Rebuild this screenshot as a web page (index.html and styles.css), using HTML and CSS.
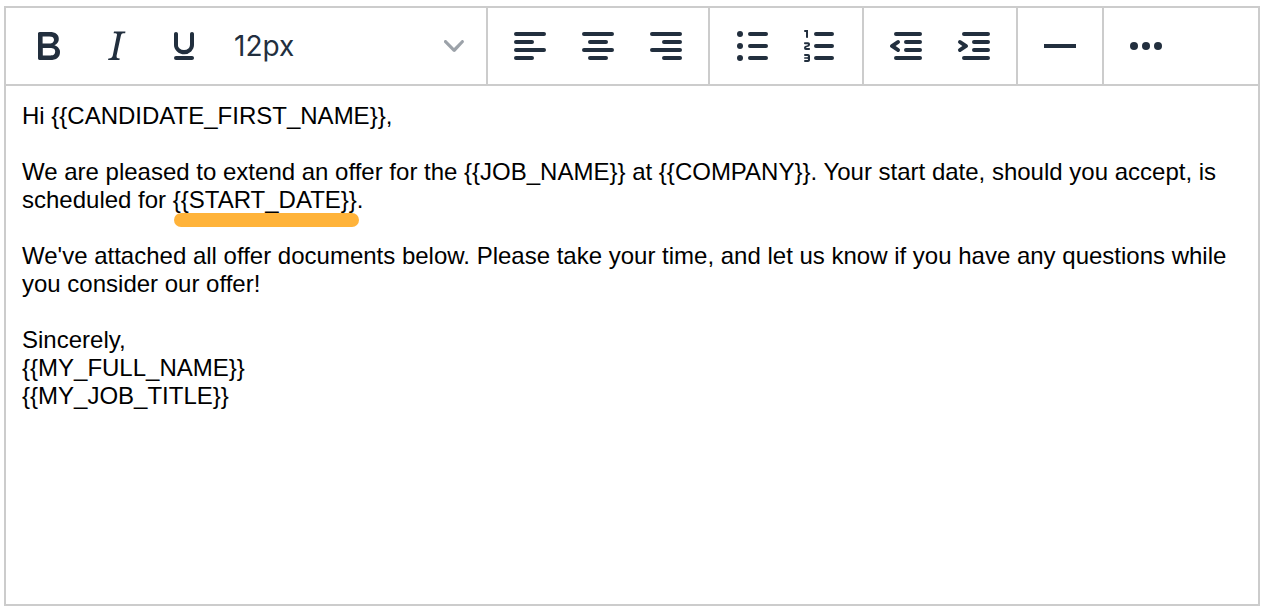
FILE: index.html
```html
<!DOCTYPE html>
<html lang="en">
<head>
  <meta charset="UTF-8" />
  <meta name="viewport" content="width=device-width, initial-scale=1" />
  <title>Offer Email</title>
  <link rel="stylesheet" href="styles.css">
</head>
<body>
  <div class="editor">
    <div class="toolbar" role="toolbar" aria-label="Formatting">

      <!-- Text style -->
      <div class="toolbar-group">
        <button type="button" class="tool" aria-label="Bold">
          <svg viewBox="0 0 24 24"><path fill-rule="evenodd" d="M7.8 19c-.3 0-.5 0-.6-.2l-.2-.5V5.7c0-.2 0-.4.2-.5l.6-.2h5c1.5 0 2.7.3 3.5 1 .7.6 1.1 1.4 1.1 2.5a3 3 0 0 1-.6 1.9c-.4.6-1 1-1.6 1.2.4.1.9.3 1.3.6s.8.7 1 1.2c.4.4.5 1 .5 1.6 0 1.3-.4 2.3-1.3 3-.8.7-2.1 1-3.8 1H7.8zm5-8.3c.6 0 1.2-.1 1.6-.5.4-.3.6-.7.6-1.3 0-1.1-.8-1.7-2.3-1.7H9.3v3.5h3.4zm.5 6c.7 0 1.3-.1 1.7-.4.4-.4.6-.9.6-1.5s-.2-1-.7-1.4c-.4-.3-1-.4-2-.4H9.4v3.8h4z"/></svg>
        </button>
        <button type="button" class="tool" aria-label="Italic">
          <svg viewBox="0 0 24 24"><path d="M16.7 4.7l-.1.9h-.3c-.6 0-1 0-1.4.3-.3.3-.4.6-.5 1.1l-2.1 9.8v.6c0 .5.4.8 1.4.8h.2l-.2.8H8l.2-.8h.2c1.1 0 1.8-.5 2-1.5l2-9.8.1-.5c0-.6-.4-.8-1.4-.8h-.3l.2-.9h5.8z"/></svg>
        </button>
        <button type="button" class="tool" aria-label="Underline">
          <svg viewBox="0 0 24 24"><path d="M16 5c.6 0 1 .4 1 1v5.5a4 4 0 0 1-.4 1.8l-1 1.4a5.3 5.3 0 0 1-5.5 1 5 5 0 0 1-1.6-1c-.5-.4-.8-.9-1.1-1.4a4 4 0 0 1-.4-1.8V6c0-.6.4-1 1-1s1 .4 1 1v5.5c0 .3 0 .6.2 1l.6.7a3.3 3.3 0 0 0 2.2.8 3.4 3.4 0 0 0 2.2-.8c.3-.2.4-.5.6-.8l.2-.9V6c0-.6.4-1 1-1zM8 17h8c.6 0 1 .4 1 1s-.4 1-1 1H8a1 1 0 0 1 0-2z"/></svg>
        </button>
        <div class="size-picker">
          <select class="size-select" aria-label="Font size">
            <option>10px</option>
            <option selected>12px</option>
            <option>14px</option>
            <option>18px</option>
          </select>
          <svg class="chevron" viewBox="0 0 10 10"><path d="M8.7 2.2c.3-.3.8-.3 1 0 .4.4.4.9 0 1.2L5.7 7.8c-.3.3-.9.3-1.2 0L.2 3.4a.8.8 0 0 1 0-1.2c.3-.3.8-.3 1.1 0L5 6l3.7-3.8z"/></svg>
        </div>
      </div>

      <!-- Alignment -->
      <div class="toolbar-group">
        <button type="button" class="tool" aria-label="Align left">
          <svg viewBox="0 0 24 24"><path class="bars" d="M5 6h14M5 10h8M5 14h14M5 18h8"/></svg>
        </button>
        <button type="button" class="tool" aria-label="Align center">
          <svg viewBox="0 0 24 24"><path class="bars" d="M5 6h14M8 10h8M5 14h14M8 18h8"/></svg>
        </button>
        <button type="button" class="tool" aria-label="Align right">
          <svg viewBox="0 0 24 24"><path class="bars" d="M5 6h14M11 10h8M5 14h14M11 18h8"/></svg>
        </button>
      </div>

      <!-- Lists -->
      <div class="toolbar-group">
        <button type="button" class="tool" aria-label="Bullet list">
          <svg viewBox="0 0 24 24">
            <path class="bars" d="M11 6h8M11 12h8M11 18h8"/>
            <circle cx="6" cy="6" r="1.5"/><circle cx="6" cy="12" r="1.5"/><circle cx="6" cy="18" r="1.5"/>
          </svg>
        </button>
        <button type="button" class="tool" aria-label="Numbered list">
          <svg viewBox="0 0 24 24">
            <path class="bars" d="M10 6h8M10 12h8M10 18h8"/>
            <path d="M6 4v3.5c0 .3-.2.5-.5.5a.5.5 0 0 1-.5-.5V5h-.5a.5.5 0 0 1 0-1H6zm-1 8.8l.2.2h1.3c.3 0 .5.2.5.5s-.2.5-.5.5H4.9a1 1 0 0 1-.9-1V13c0-.4.3-.8.6-1l1.2-.4.2-.3a.2.2 0 0 0-.2-.2H4.5a.5.5 0 0 1-.5-.5c0-.3.2-.5.5-.5h1.6c.5 0 .9.4.9 1v.1c0 .4-.3.8-.6 1l-1.2.4-.2.3zM7 17v2c0 .6-.4 1-1 1H4.5a.5.5 0 0 1 0-1h1.2c.2 0 .3-.1.3-.3 0-.2-.1-.3-.3-.3H4.4a.4.4 0 1 1 0-.8h1.3c.2 0 .3-.1.3-.3 0-.2-.1-.3-.3-.3H4.5a.5.5 0 1 1 0-1H6c.6 0 1 .4 1 1z"/>
          </svg>
        </button>
      </div>

      <!-- Indentation -->
      <div class="toolbar-group">
        <button type="button" class="tool" aria-label="Decrease indent">
          <svg viewBox="0 0 24 24">
            <path class="bars" d="M7 6h12M12 10h7M12 14h7M7 18h12"/>
            <path d="M8.6 13.2a1 1 0 0 1-1.2 1.6l-3-2a1 1 0 0 1 0-1.6l3-2a1 1 0 0 1 1.2 1.6L6.8 12l1.8 1.2z"/>
          </svg>
        </button>
        <button type="button" class="tool" aria-label="Increase indent">
          <svg viewBox="0 0 24 24">
            <path class="bars" d="M7 6h12M12 10h7M12 14h7M7 18h12"/>
            <path d="M4.4 13.2L6.2 12l-1.8-1.2a1 1 0 0 1 1.2-1.6l3 2a1 1 0 0 1 0 1.6l-3 2a1 1 0 1 1-1.2-1.6z"/>
          </svg>
        </button>
      </div>

      <div class="toolbar-group">
        <button type="button" class="tool" aria-label="Horizontal line">
          <svg viewBox="0 0 24 24"><path d="M4 11h16v2H4z"/></svg>
        </button>
      </div>

      <div class="toolbar-group">
        <button type="button" class="tool" aria-label="More">
          <svg viewBox="0 0 24 24"><circle cx="6" cy="12" r="2"/><circle cx="12" cy="12" r="2"/><circle cx="18" cy="12" r="2"/></svg>
        </button>
      </div>
    </div>

    <div class="message" role="textbox" aria-multiline="true" aria-label="Message" contenteditable="true" spellcheck="false">
      <p>Hi {{CANDIDATE_FIRST_NAME}},</p>
      <p>We are pleased to extend an offer for the {{JOB_NAME}} at {{COMPANY}}. Your start date, should you accept, is scheduled for <span class="marked">{{START_DATE}}</span>.</p>
      <p>We've attached all offer documents below. Please take your time, and let us know if you have any questions while you consider our offer!</p>
      <p>Sincerely,<br>{{MY_FULL_NAME}}<br>{{MY_JOB_TITLE}}</p>
    </div>
  </div>
</body>
</html>
```

FILE: styles.css
```css
* {
  box-sizing: border-box;
  margin: 0;
  padding: 0;
}

body {
  display: flex;
  min-height: 100vh;
  padding: 6px 6px 6px 4px;
  background: #fff;
  color: #000;
  font-family: "Liberation Sans", Arial, sans-serif;
}

.editor {
  flex: 1;
  display: flex;
  flex-direction: column;
  border: 2px solid #ccc;
}

/* Toolbar */
.toolbar {
  display: flex;
  flex-wrap: wrap;
  border-bottom: 2px solid #ccc;
}

.toolbar-group {
  display: flex;
  align-items: center;
  padding: 4px 8px;
  border-right: 2px solid #ccc;
}

.toolbar-group:last-child {
  border-right: none;
}

.tool {
  display: flex;
  align-items: center;
  justify-content: center;
  width: 68px;
  height: 68px;
  background: none;
  border: none;
  border-radius: 6px;
  cursor: pointer;
}

.tool:hover {
  background: #dee0e2;
}

.tool svg {
  width: 48px;
  height: 48px;
  fill: #222f3e;
}

.tool .bars {
  fill: none;
  stroke: #222f3e;
  stroke-width: 2;
  stroke-linecap: round;
}

/* Font size drop-down, the chevron shares the select's grid cell */
.size-picker {
  display: grid;
  align-items: center;
  width: 260px;
}

.size-select,
.chevron {
  grid-area: 1 / 1;
}

.size-select {
  width: 100%;
  height: 68px;
  padding: 0 48px 0 16px;
  appearance: none;
  background: none;
  border: none;
  color: #222f3e;
  font-family: Inter, Roboto, sans-serif;
  font-size: 28px;
  cursor: pointer;
}

.chevron {
  justify-self: end;
  width: 20px;
  height: 20px;
  margin-right: 14px;
  fill: #9ca2a9;
  pointer-events: none;
}

/* Message body */
.message {
  flex: 1;
  padding: 16px;
  font-size: 24px;
  line-height: 28px;
  outline: none;
}

.message p + p {
  margin-top: 28px;
}

.marked {
  position: relative;
  white-space: nowrap;
}

/* Marker stroke under a placeholder */
.marked::after {
  content: "";
  position: absolute;
  top: 100%;
  left: 1px;
  right: -2px;
  height: 14px;
  border-radius: 7px;
  background: #ffb33a;
}
```
